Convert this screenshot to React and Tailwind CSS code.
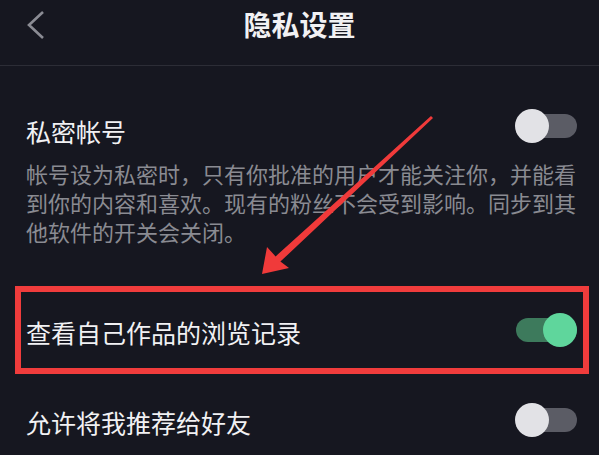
const Toggle = ({ on }) => (
  <div className="relative flex h-[34px] w-[62px] shrink-0 items-center justify-end">
    <div className={`h-[24px] w-[61px] rounded-full ${on ? "bg-[#3d7a5c]" : "bg-[#5b5c65]"}`} />
    <div
      className={`absolute top-0 h-[34px] w-[34px] rounded-full ${
        on ? "right-0 bg-[#5fd69c]" : "left-0 bg-[#e2e2e6]"
      }`}
    />
  </div>
);

export default function App() {
  return (
    <div
      className="relative h-[455px] w-[599px] overflow-hidden bg-[#161720] text-[#f1f1f3]"
      style={{ fontFamily: '"Noto Sans CJK SC", "Noto Sans", sans-serif' }}
    >
      {/* Header */}
      <div className="h-[66px] border-b border-[#2c2d36]">
        <div className="grid h-[48px] grid-cols-[100px_1fr_100px] items-center">
          <div className="pl-[26px] pt-[2px]">
            <svg width="20" height="32" viewBox="0 0 20 32" fill="none">
              <path d="M17 3 L3 16 L17 29" stroke="#8b8c94" strokeWidth="2.6" />
            </svg>
          </div>
          <h1 className="text-center text-[28px] font-bold leading-[48px]">隐私设置</h1>
          <div />
        </div>
      </div>

      {/* 私密帐号 */}
      <div className="mt-[43px] flex h-[34px] items-start justify-between pl-[26px] pr-[22px]">
        <span className="mt-[5px] text-[25px] leading-[34px]">私密帐号</span>
        <Toggle on={false} />
      </div>
      <div className="mt-[16px] pl-[26px] text-[22px] leading-[29px] text-[#8a8b92] whitespace-nowrap">
        <p>帐号设为私密时，只有你批准的用户才能关注你，并能看</p>
        <p>到你的内容和喜欢。现有的粉丝不会受到影响。同步到其</p>
        <p>他软件的开关会关闭。</p>
      </div>

      {/* 查看自己作品的浏览记录 */}
      <div className="ml-[15px] mt-[40px] flex h-[88px] w-[574px] items-center justify-between border-[6px] border-[#f03c3c] pl-[5px] pr-[6px]">
        <span className="mt-[3px] text-[25px] leading-[34px]">查看自己作品的浏览记录</span>
        <Toggle on={true} />
      </div>

      {/* 允许将我推荐给好友 */}
      <div className="mt-[29px] flex h-[34px] items-start justify-between pl-[26px] pr-[22px]">
        <span className="mt-[2px] text-[25px] leading-[34px]">允许将我推荐给好友</span>
        <Toggle on={false} />
      </div>

      {/* annotation arrow */}
      <svg className="pointer-events-none absolute left-0 top-0" width="599" height="455" viewBox="0 0 599 455">
        <polygon
          points="431,116 433,118 280.4,261.6 289,268 262,274 267,247 275.6,256.4"
          fill="#f03a3a"
        />
      </svg>
    </div>
  );
}
